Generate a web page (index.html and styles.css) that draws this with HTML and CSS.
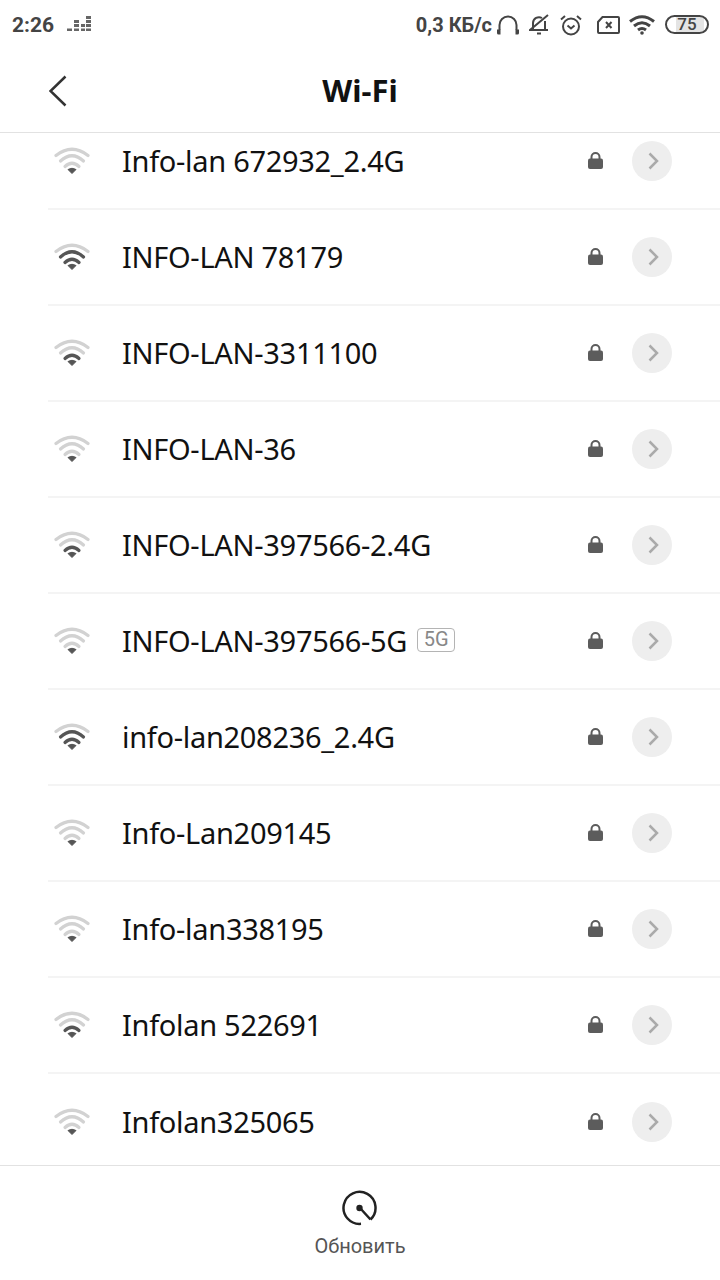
FILE: index.html
```html
<!DOCTYPE html>
<html lang="ru">
<head>
	<meta charset="utf-8">
	<meta name="viewport" content="width=device-width, initial-scale=1.0">
	<title>Wi-Fi</title>
	<link rel="stylesheet" href="styles.css">
</head>
<body>
	<svg class="defs" width="0" height="0">
		<symbol id="wifi" viewBox="0 0 36 30">
			<path class="arc a3" d="M2 9.5Q18 -3 34 9.5"/>
			<path class="arc a2" d="M6.5 15Q18 4.5 29.5 15"/>
			<path class="arc a1" d="M11 20.5Q18 14 25 20.5"/>
			<path class="dot" d="M14 23.500Q18 21 22 23.500L18 27.500Z"/>
		</symbol>
		<symbol id="lock" viewBox="0 0 15 17">
			<path class="lock-body" d="M2 6.500H13Q15 6.500 15 8.500V15Q15 17 13 17H2Q0 17 0 15V8.500Q0 6.500 2 6.500Z"/>
			<path class="lock-bow" d="M3.500 7V5A4 4 0 0 1 11.500 5V7"/>
		</symbol>
	</svg>

	<div class="status">
		<span class="time">2:26</span>
		<svg class="eq" width="24" height="15" viewBox="0 0 24 15">
			<path d="M0 12.500h5v2.500H0zM7 4h5v3H7zM7 8h5v3H7zM7 12.500h5v2.500H7zM14 8h4v3h-4zM14 12.500h4v2.500h-4zM19 0h5v3h-5zM19 4h5v3h-5zM19 8h5v3h-5zM19 12.500h5v2.500h-5z"/>
		</svg>
		<span class="spacer"></span>
		<span class="speed">0,3 КБ/с</span>
		<svg class="ic ic-head" width="22" height="20" viewBox="0 0 22 20">
			<path d="M2.500 15V10a8.500 8.500 0 0 1 17 0v5"/>
			<path class="solid" d="M0 14.500h3.500v5H1.500q-1.500 0-1.500-1.500zM22 14.500h-3.500v5h2q1.500 0 1.500-1.500z"/>
		</svg>
		<svg class="ic ic-bell" width="20" height="21" viewBox="0 0 20 21">
			<path d="M4 16V9a6 6 0 0 1 9-5M16 7v9h3H1l18-15M8 19.500h4"/>
		</svg>
		<svg class="ic ic-alarm" width="22" height="22" viewBox="0 0 22 22">
			<circle cx="11" cy="12.500" r="8"/>
			<path d="M7.500 11.500l3.500 3 3.500-3M1 5.500L5 2M21 5.500L17 2"/>
		</svg>
		<svg class="ic ic-sim" width="23" height="18" viewBox="0 0 23 18">
			<path d="M5.500 1H21q1 0 1 1v14q0 1-1 1H2q-1 0-1-1V6z"/>
			<path d="M9 6l5.500 6M14.500 6L9 12"/>
		</svg>
		<svg class="ic ic-wifi" width="26" height="20" viewBox="0 0 26 20">
			<path d="M1 6.500Q13 -3 25 6.500M5 11Q13 4.500 21 11M9 15Q13 12 17 15"/>
			<circle class="solid" cx="13" cy="18" r="1.800"/>
		</svg>
		<span class="battery"><span class="battery-num">75</span></span>
	</div>

	<header class="head">
		<svg class="back" width="18" height="32" viewBox="0 0 18 32">
			<path d="M16.500 1.500L1.500 16L16.500 30.500"/>
		</svg>
		<h1 class="title">Wi-Fi</h1>
	</header>

	<main class="list-wrap">
		<ul class="list">
			<li class="row sig1">
				<svg class="sig"><use href="#wifi"/></svg>
				<span class="name">Info-lan 672932_2.4G</span>
				<svg class="lock"><use href="#lock"/></svg>
				<span class="more"><svg width="11" height="18" viewBox="0 0 11 18"><path d="M1.500 1.500L9 9L1.500 16.500"/></svg></span>
			</li>
			<li class="row sig3">
				<svg class="sig"><use href="#wifi"/></svg>
				<span class="name">INFO-LAN 78179</span>
				<svg class="lock"><use href="#lock"/></svg>
				<span class="more"><svg width="11" height="18" viewBox="0 0 11 18"><path d="M1.500 1.500L9 9L1.500 16.500"/></svg></span>
			</li>
			<li class="row sig2">
				<svg class="sig"><use href="#wifi"/></svg>
				<span class="name">INFO-LAN-3311100</span>
				<svg class="lock"><use href="#lock"/></svg>
				<span class="more"><svg width="11" height="18" viewBox="0 0 11 18"><path d="M1.500 1.500L9 9L1.500 16.500"/></svg></span>
			</li>
			<li class="row sig1">
				<svg class="sig"><use href="#wifi"/></svg>
				<span class="name">INFO-LAN-36</span>
				<svg class="lock"><use href="#lock"/></svg>
				<span class="more"><svg width="11" height="18" viewBox="0 0 11 18"><path d="M1.500 1.500L9 9L1.500 16.500"/></svg></span>
			</li>
			<li class="row sig2">
				<svg class="sig"><use href="#wifi"/></svg>
				<span class="name">INFO-LAN-397566-2.4G</span>
				<svg class="lock"><use href="#lock"/></svg>
				<span class="more"><svg width="11" height="18" viewBox="0 0 11 18"><path d="M1.500 1.500L9 9L1.500 16.500"/></svg></span>
			</li>
			<li class="row sig1">
				<svg class="sig"><use href="#wifi"/></svg>
				<span class="name">INFO-LAN-397566-5G</span>
				<span class="badge">5G</span>
				<svg class="lock"><use href="#lock"/></svg>
				<span class="more"><svg width="11" height="18" viewBox="0 0 11 18"><path d="M1.500 1.500L9 9L1.500 16.500"/></svg></span>
			</li>
			<li class="row sig3">
				<svg class="sig"><use href="#wifi"/></svg>
				<span class="name">info-lan208236_2.4G</span>
				<svg class="lock"><use href="#lock"/></svg>
				<span class="more"><svg width="11" height="18" viewBox="0 0 11 18"><path d="M1.500 1.500L9 9L1.500 16.500"/></svg></span>
			</li>
			<li class="row sig1">
				<svg class="sig"><use href="#wifi"/></svg>
				<span class="name">Info-Lan209145</span>
				<svg class="lock"><use href="#lock"/></svg>
				<span class="more"><svg width="11" height="18" viewBox="0 0 11 18"><path d="M1.500 1.500L9 9L1.500 16.500"/></svg></span>
			</li>
			<li class="row sig1">
				<svg class="sig"><use href="#wifi"/></svg>
				<span class="name">Info-lan338195</span>
				<svg class="lock"><use href="#lock"/></svg>
				<span class="more"><svg width="11" height="18" viewBox="0 0 11 18"><path d="M1.500 1.500L9 9L1.500 16.500"/></svg></span>
			</li>
			<li class="row sig2">
				<svg class="sig"><use href="#wifi"/></svg>
				<span class="name">Infolan 522691</span>
				<svg class="lock"><use href="#lock"/></svg>
				<span class="more"><svg width="11" height="18" viewBox="0 0 11 18"><path d="M1.500 1.500L9 9L1.500 16.500"/></svg></span>
			</li>
			<li class="row sig1">
				<svg class="sig"><use href="#wifi"/></svg>
				<span class="name">Infolan325065</span>
				<svg class="lock"><use href="#lock"/></svg>
				<span class="more"><svg width="11" height="18" viewBox="0 0 11 18"><path d="M1.500 1.500L9 9L1.500 16.500"/></svg></span>
			</li>
		</ul>
	</main>

	<footer class="foot">
		<svg class="refresh" width="36" height="36" viewBox="0 0 36 36">
			<path d="M28.500 29.500A16 16 0 1 0 19 33.800M28.500 29.500L18 18"/>
			<circle cx="17.500" cy="18" r="3.200"/>
		</svg>
		<span class="foot-label">Обновить</span>
	</footer>
</body>
</html>
```

FILE: styles.css
```css
* {
	box-sizing: border-box;
}
html, body {
	margin: 0;
	padding: 0;
}
body {
	width: 720px;
	height: 1280px;
	overflow: hidden;
	display: flex;
	flex-direction: column;
	background: #fff;
	color: #111;
	font-family: "Noto Sans", "Open Sans", sans-serif;
}
.defs {
	position: absolute;
}

/* status bar */
.status {
	height: 50px;
	flex: none;
	display: flex;
	align-items: center;
	padding: 0 11px 0 12px;
	color: #444;
	font-family: Roboto, sans-serif;
	font-weight: 700;
}
.time {
	font-size: 21px;
	margin-right: 13px;
}
.eq {
	fill: #666;
	margin-top: -3px;
}
.spacer {
	flex: 1;
}
.speed {
	font-size: 20px;
	margin-right: 5px;
}
.ic {
	fill: none;
	stroke: #444;
	stroke-width: 2;
	margin-top: -1px;
}
.ic .solid {
	fill: #444;
	stroke: none;
}
.ic-head {
	margin-right: 10px;
}
.ic-bell {
	margin-right: 11px;
}
.ic-alarm {
	margin-right: 15px;
}
.ic-sim {
	margin-right: 9px;
}
.ic-wifi {
	stroke-width: 3;
	margin-right: 10px;
}
.battery {
	width: 44px;
	height: 19px;
	border: 2px solid #444;
	border-radius: 10px;
	margin-top: -1px;
	display: flex;
	align-items: center;
	justify-content: center;
	background: linear-gradient(90deg, #fff 22%, #e4e4e4 22%, #e4e4e4 92%, #fff 92%);
}
.battery-num {
	font-size: 17px;
	font-weight: 500;
	line-height: 1;
}

/* title bar */
.head {
	height: 83px;
	flex: none;
	display: flex;
	align-items: center;
	justify-content: center;
	position: relative;
	border-bottom: 1px solid #e2e2e2;
}
.back {
	position: absolute;
	left: 49px;
	top: 25px;
	fill: none;
	stroke: #333;
	stroke-width: 2.500;
}
.title {
	margin: 0 0 1px;
	font-size: 31px;
	font-weight: 700;
	line-height: 1;
	color: #111;
}

/* network list */
.list-wrap {
	flex: 1;
	min-height: 0;
	overflow: hidden;
}
.list {
	list-style: none;
	margin: -19px 0 0;
	padding: 0 0 0 48px;
}
.row {
	--on: #555;
	--off: #d2d2d2;
	height: 96px;
	display: flex;
	align-items: center;
	padding-right: 48px;
	border-bottom: 2px solid #f4f4f4;
}
.row:last-child {
	border-bottom: 0;
}
.sig {
	width: 36px;
	height: 30px;
	margin: 0 32px 0 6px;
	flex: none;
}
.arc {
	fill: none;
	stroke-width: 3.200;
	stroke-linecap: round;
}
/* use content is a shadow tree, so the signal level goes in through custom properties */
.a1 {
	stroke: var(--s1);
}
.a2 {
	stroke: var(--s2);
}
.a3 {
	stroke: var(--off);
}
.sig1 {
	--s1: var(--off);
	--s2: var(--off);
}
.sig2 {
	--s1: var(--on);
	--s2: var(--off);
}
.sig3 {
	--s1: var(--on);
	--s2: var(--on);
}
.dot {
	fill: #555;
	stroke: #555;
	stroke-width: 1;
	stroke-linejoin: round;
}
.name {
	font-size: 29px;
	letter-spacing: -0.3px;
	line-height: 1;
	color: #111;
	margin-bottom: 2px;
}
.badge {
	margin-left: 10px;
	width: 38px;
	height: 24px;
	margin-bottom: 2px;
	border: 1.500px solid #b4b4b4;
	border-radius: 4px;
	font-family: Roboto, sans-serif;
	font-size: 20px;
	line-height: 21px;
	text-align: center;
	color: #888;
}
.lock {
	width: 15px;
	height: 17px;
	margin-left: auto;
	margin-right: 29px;
	margin-bottom: 2px;
	flex: none;
}
.lock-body {
	fill: #5c5c5c;
}
.lock-bow {
	fill: none;
	stroke: #5c5c5c;
	stroke-width: 2;
}
.more {
	width: 40px;
	height: 40px;
	flex: none;
	border-radius: 50%;
	background: #eee;
	display: flex;
	align-items: center;
	justify-content: center;
}
.more svg {
	fill: none;
	stroke: #aaa;
	stroke-width: 2.500;
	margin-left: 3px;
}

/* bottom action */
.foot {
	height: 115px;
	flex: none;
	border-top: 1px solid #e2e2e2;
	display: flex;
	flex-direction: column;
	align-items: center;
	padding-top: 24px;
}
.refresh {
	fill: none;
	stroke: #222;
	stroke-width: 2.500;
}
.refresh circle {
	fill: #222;
	stroke: none;
}
.foot-label {
	margin-top: 8px;
	font-size: 20px;
	line-height: 24px;
	color: #555;
	font-family: Roboto, sans-serif;
}
```
